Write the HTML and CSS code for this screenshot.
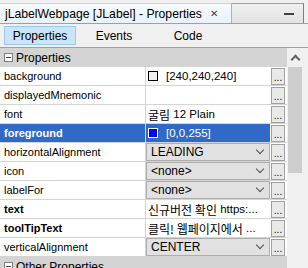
FILE: index.html
```html
<!DOCTYPE html>
<html>
<head>
<meta charset="utf-8">
<title>jLabelWebpage Properties</title>
<link rel="stylesheet" href="styles.css">
</head>
<body>
<div class="panel">
    <div class="titlebar">
        <div class="title-tab">
            <span class="title-text">jLabelWebpage [JLabel] - Properties</span>
            <span class="close">&#x2715;</span>
        </div>
        <div class="title-rest"><span class="minimize"></span></div>
    </div>
    <div class="tabs">
        <div class="tab active">Properties</div>
        <div class="tab">Events</div>
        <div class="tab">Code</div>
    </div>
    <div class="sheet">
        <div class="grid">
            <div class="category"><span class="toggle"></span>Properties</div>
            <div class="row">
                <div class="name">background</div>
                <div class="value"><span class="swatch"></span>[240,240,240]</div>
                <div class="dots">...</div>
            </div>
            <div class="row">
                <div class="name">displayedMnemonic</div>
                <div class="value"></div>
                <div class="dots">...</div>
            </div>
            <div class="row">
                <div class="name">font</div>
                <div class="value"><span class="ko">굴림</span>&nbsp;12 Plain</div>
                <div class="dots">...</div>
            </div>
            <div class="row selected">
                <div class="name bold">foreground</div>
                <div class="value"><span class="swatch blue"></span>[0,0,255]</div>
                <div class="dots">...</div>
            </div>
            <div class="row">
                <div class="name">horizontalAlignment</div>
                <div class="value"><div class="combo">LEADING<span class="chevron"></span></div></div>
                <div class="dots">...</div>
            </div>
            <div class="row">
                <div class="name">icon</div>
                <div class="value"><div class="combo">&lt;none&gt;<span class="chevron"></span></div></div>
                <div class="dots">...</div>
            </div>
            <div class="row">
                <div class="name">labelFor</div>
                <div class="value"><div class="combo">&lt;none&gt;<span class="chevron"></span></div></div>
                <div class="dots">...</div>
            </div>
            <div class="row">
                <div class="name bold">text</div>
                <div class="value"><span class="ko">신규버전 확인</span>&nbsp;https:...</div>
                <div class="dots">...</div>
            </div>
            <div class="row">
                <div class="name bold">toolTipText</div>
                <div class="value"><span class="ko">클릭! 웹페이지에서</span>&nbsp;...</div>
                <div class="dots">...</div>
            </div>
            <div class="row">
                <div class="name">verticalAlignment</div>
                <div class="value"><div class="combo">CENTER<span class="chevron"></span></div></div>
                <div class="dots">...</div>
            </div>
            <div class="category"><span class="toggle"></span>Other Properties</div>
        </div>
        <div class="scrollbar">
            <div class="arrow"><span class="up"></span></div>
            <div class="thumb"></div>
        </div>
        <div class="edge"></div>
    </div>
</div>
</body>
</html>
```

FILE: styles.css
```css
:root {
    --panel-bg: #f0f0f0;
    --line: #a0a0a0;
    --grid-line: #d4d4d4;
    --category-bg: #d4d4d4;
    --select-bg: #3169c6;
    --combo-bg: #e1e1e1;
    --combo-border: #adadad;
    --tab-active-bg: #cce4f7;
    --tab-active-border: #99c9ef;
}

body, html {
    margin: 0;
    padding: 0;
    overflow: hidden;
    background-color: var(--panel-bg);
    font-family: "Liberation Sans", "Noto Sans CJK KR", Arial, sans-serif;
    color: #000;
}

.panel {
    width: 308px;
    height: 268px;
    display: flex;
    flex-direction: column;
}

.titlebar {
    flex: 0 0 auto;
    height: 23px;
    display: flex;
    align-items: flex-end;
    border-bottom: 1px solid var(--line);
    background-color: #f0f0f0;
}

.title-tab {
    width: 226px;
    height: 19px;
    display: flex;
    align-items: center;
    padding-left: 5px;
    background: linear-gradient(#f7fafd, #e9f2fb);
    border-top: 1px solid #c4d6ea;
    border-right: 1px solid #8fb6df;
    font-size: 12.2px;
}

.title-text {
    white-space: nowrap;
    margin-right: 8px;
}

.close {
    font-size: 10px;
    color: #404040;
}

.title-rest {
    flex: 1;
    height: 19px;
    display: flex;
    align-items: center;
    justify-content: flex-end;
    padding-right: 9px;
    background: linear-gradient(#efefef, #e3e3e3);
    border-top: 1px solid var(--line);
    border-right: 1px solid #3c8fe0;
    margin-right: 4px;
}

.minimize {
    width: 10px;
    height: 2px;
    background-color: #404040;
}

.tabs {
    flex: 0 0 auto;
    height: 23px;
    display: flex;
    align-items: center;
    gap: 2px;
    padding-left: 4px;
    border-bottom: 1px solid var(--line);
}

.tab {
    width: 72px;
    height: 19px;
    box-sizing: border-box;
    display: flex;
    align-items: center;
    justify-content: center;
    font-size: 12px;
    border: 1px solid transparent;
}

.tab.active {
    background-color: var(--tab-active-bg);
    border-color: var(--tab-active-border);
}

.sheet {
    flex: 1;
    display: flex;
    min-height: 0;
}

.grid {
    width: 287px;
    display: flex;
    flex-direction: column;
    background-color: #fff;
    overflow: hidden;
}

.category {
    flex: 0 0 19px;
    display: flex;
    align-items: center;
    background-color: var(--category-bg);
    font-size: 12px;
    padding-left: 4px;
}

.toggle {
    width: 9px;
    height: 9px;
    box-sizing: border-box;
    border: 1px solid #808080;
    background: #fff linear-gradient(#404040, #404040) center / 5px 1px no-repeat;
    margin-right: 3px;
}

.row {
    flex: 0 0 19px;
    box-sizing: border-box;
    display: flex;
    border-bottom: 1px solid var(--grid-line);
    font-size: 11px;
}

.name {
    width: 141px;
    padding-left: 4px;
    display: flex;
    align-items: center;
    border-right: 1px solid var(--grid-line);
    white-space: nowrap;
}

.name.bold {
    font-weight: bold;
}

.value {
    flex: 1;
    display: flex;
    align-items: center;
    padding-left: 2px;
    white-space: nowrap;
    overflow: hidden;
    font-size: 11.5px;
}

.ko {
    font-size: 12px;
    font-family: "Noto Sans CJK KR", sans-serif;
}

.swatch {
    width: 10px;
    height: 10px;
    box-sizing: border-box;
    border: 1px solid #000;
    background-color: #f0f0f0;
    margin-right: 8px;
}

.swatch.blue {
    background-color: #0000ff;
    border-color: #fff;
}

.row.selected .name,
.row.selected .value {
    background-color: var(--select-bg);
    color: #fff;
}

.combo {
    flex: 1;
    height: 18px;
    box-sizing: border-box;
    display: flex;
    align-items: center;
    justify-content: space-between;
    margin-left: -2px;
    padding: 0 6px 0 4px;
    background-color: var(--combo-bg);
    border: 1px solid var(--combo-border);
    font-size: 12px;
}

.chevron {
    width: 5px;
    height: 5px;
    border-right: 1px solid #505050;
    border-bottom: 1px solid #505050;
    transform: rotate(45deg);
    margin-top: -4px;
}

.dots {
    width: 14px;
    height: 17px;
    box-sizing: border-box;
    margin: 0 2px 0 1px;
    align-self: center;
    display: flex;
    align-items: flex-end;
    justify-content: center;
    background-color: #e9e9e9;
    border: 1px solid #a0a0a0;
    font-size: 10px;
    line-height: 12px;
}

.scrollbar {
    width: 16px;
    display: flex;
    flex-direction: column;
    background-color: #f0f0f0;
}

.arrow {
    height: 19px;
    display: flex;
    align-items: center;
    justify-content: center;
}

.up {
    width: 5px;
    height: 5px;
    border-left: 2px solid #606060;
    border-top: 2px solid #606060;
    transform: rotate(45deg);
    margin-top: 4px;
}

.thumb {
    height: 106px;
    margin: 0 1px;
    background-color: #cdcdcd;
}

.edge {
    flex: 1;
    background-color: #f0f0f0;
}
```
